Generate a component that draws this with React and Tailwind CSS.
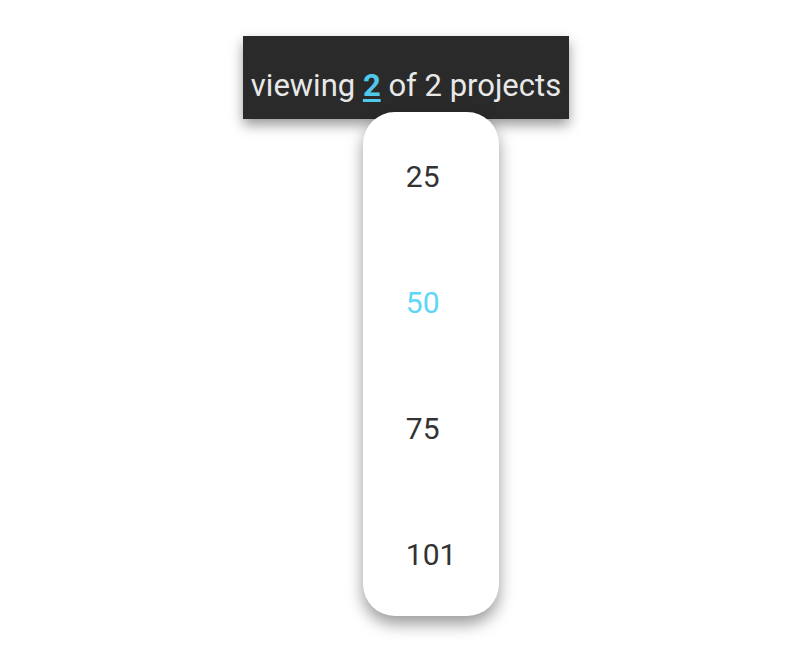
import React from "react";

export default function App() {
  const items = ["25", "50", "75", "101"];
  return (
    <div className="min-h-[658px] w-full bg-white flex justify-center pt-[36px]" style={{ fontFamily: "Roboto, 'Noto Sans', sans-serif" }}>
      <div className="relative ml-[4px]">
        <div className="h-[83px] bg-[#2a2a2a] px-[8px] pt-[30px] text-[31px] leading-[40px] text-[#e8e8e8] whitespace-nowrap shadow-[0_6px_12px_rgba(0,0,0,0.4)]">
          viewing{" "}
          <span className="font-bold text-[#4fc8ea] underline decoration-[3px] underline-offset-[3px]">2</span>{" "}
          of 2 projects
        </div>
        <div className="absolute left-[120px] top-[76px] w-[136px] rounded-[32px] bg-white shadow-[0_8px_16px_rgba(0,0,0,0.4)] flex flex-col">
          {items.map((it) => (
            <div key={it} className={`h-[126px] flex items-center pl-[43px] pt-[2px] text-[30px] ${it === "50" ? "text-[#5dd6f7]" : "text-[#333333]"}`}>
              {it}
            </div>
          ))}
        </div>
      </div>
    </div>
  );
}
